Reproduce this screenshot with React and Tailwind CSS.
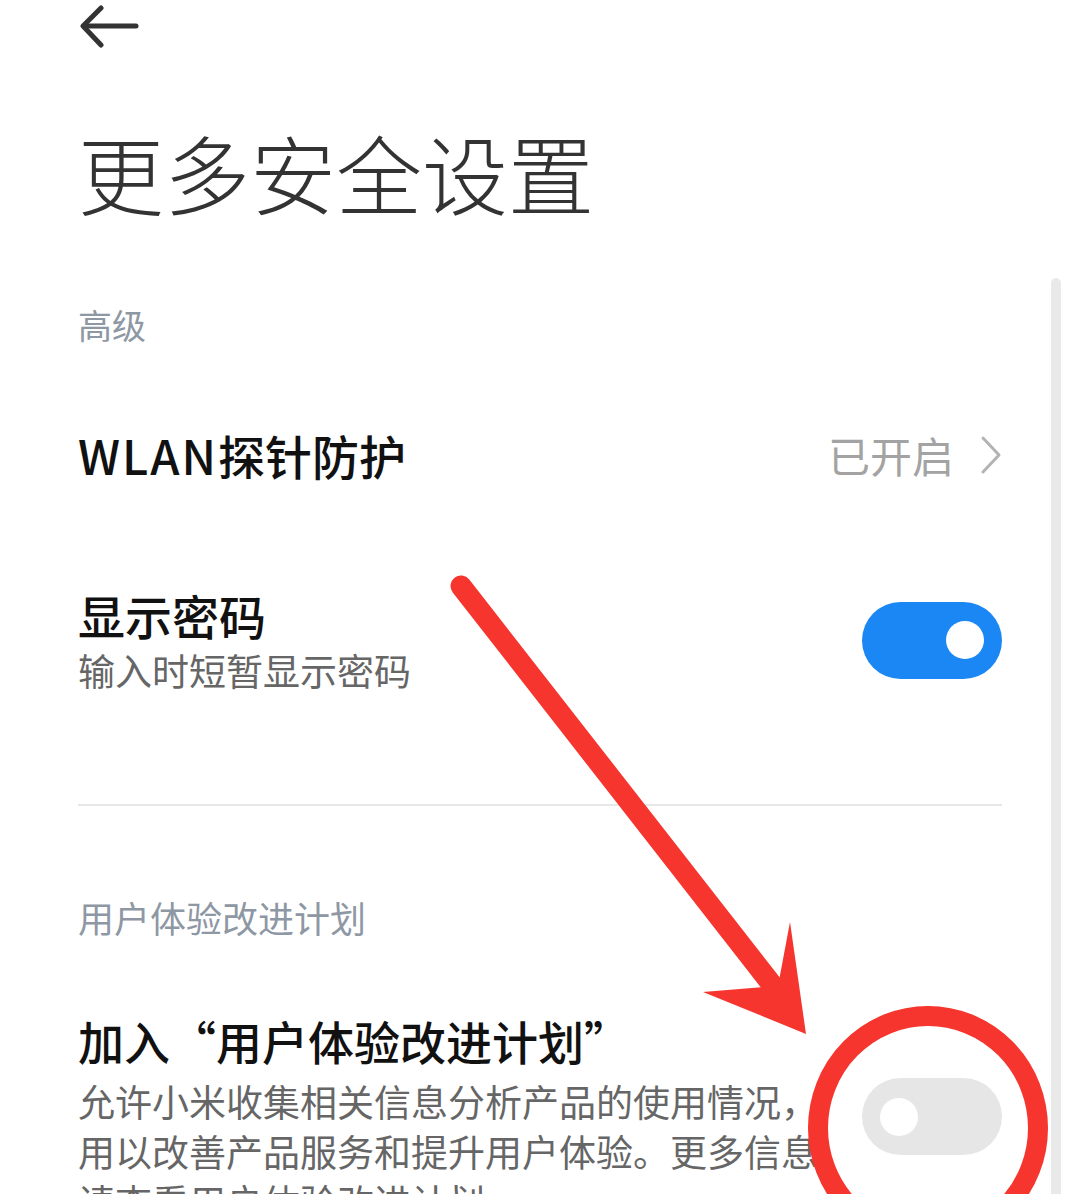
import React from 'react';

const font = { fontFamily: '"Noto Sans CJK SC", "Noto Sans", sans-serif' };

function Toggle({ on }) {
    return (
        <div className={`w-[140px] h-[77px] rounded-full flex items-center px-[18px] shrink-0 ${on ? 'bg-[#1a87f5] justify-end' : 'bg-[#e6e6e6] justify-start'}`}>
            <div className="w-[38px] h-[38px] rounded-full bg-white" />
        </div>
    );
}

export default function App() {
    return (
        <div className="relative w-[1080px] h-[1194px] overflow-hidden bg-white text-[#111]" style={font}>
            {/* header */}
            <div className="h-[54px] flex items-center pl-[80px]">
                <svg width="60" height="44" viewBox="0 0 60 44" fill="none" stroke="#333" strokeWidth="5" strokeLinecap="round" strokeLinejoin="round">
                    <path d="M4 21 H56" />
                    <path d="M21 3 L3 21 L21 40" />
                </svg>
            </div>

            <div className="px-[78px]">
                <h1 className="mt-[75px] text-[86px] leading-[86px] font-light text-[#333]">更多安全设置</h1>

                <div className="mt-[93px] text-[34px] leading-[34px] text-[#8e97a4]">高级</div>

                <div className="mt-[90px] h-[46px] flex items-center justify-between">
                    <div className="text-[47px] leading-[46px] font-medium">
                        <span className="tracking-[2px]">WLAN</span>探针防护
                    </div>
                    <div className="flex items-center gap-[26px]">
                        <span className="text-[42px] leading-[42px] text-[#a3a3a3]">已开启</span>
                        <svg width="22" height="40" viewBox="0 0 22 40" fill="none" stroke="#b3b3b3" strokeWidth="3" strokeLinecap="round" strokeLinejoin="round">
                            <path d="M3 3 L19 20 L3 37" />
                        </svg>
                    </div>
                </div>

                <div className="mt-[113px] flex items-center justify-between">
                    <div className="flex flex-col gap-[14px]">
                        <div className="text-[47px] leading-[47px] font-medium">显示密码</div>
                        <div className="text-[37px] leading-[37px] text-[#666]">输入时短暂显示密码</div>
                    </div>
                    <Toggle on />
                </div>

                <div className="mt-[115px] h-[2px] bg-[#e8e8e8]" />

                <div className="mt-[93px] text-[36px] leading-[36px] text-[#8e97a4]">用户体验改进计划</div>

                <div className="mt-[82px] flex items-start justify-between">
                    <div className="flex flex-col gap-[13px]">
                        <div className="text-[46px] leading-[46px] font-medium">加入“用户体验改进计划”</div>
                        <div className="text-[37px] leading-[50px] text-[#666] whitespace-nowrap">
                            <div>允许小米收集相关信息分析产品的使用情况，</div>
                            <div>用以改善产品服务和提升用户体验。更多信息</div>
                            <div>请查看用户体验改进计划</div>
                        </div>
                    </div>
                    <div className="mt-[61px]">
                        <Toggle on={false} />
                    </div>
                </div>
            </div>

            {/* scroll indicator */}
            <div className="absolute left-[1051px] top-[278px] bottom-0 w-[10px] rounded-t-full bg-[#e9e9e9]" />

            {/* red annotation */}
            <svg className="absolute inset-0 pointer-events-none" width="1080" height="1194" viewBox="0 0 1080 1194">
                <line x1="461" y1="586" x2="784" y2="1000" stroke="#f5352e" strokeWidth="21" strokeLinecap="round" />
                <polygon points="790,922 806,1034 703,992 778,986" fill="#f5352e" />
                <ellipse cx="928" cy="1128" rx="110" ry="112" fill="none" stroke="#f5352e" strokeWidth="20" />
            </svg>
        </div>
    );
}
